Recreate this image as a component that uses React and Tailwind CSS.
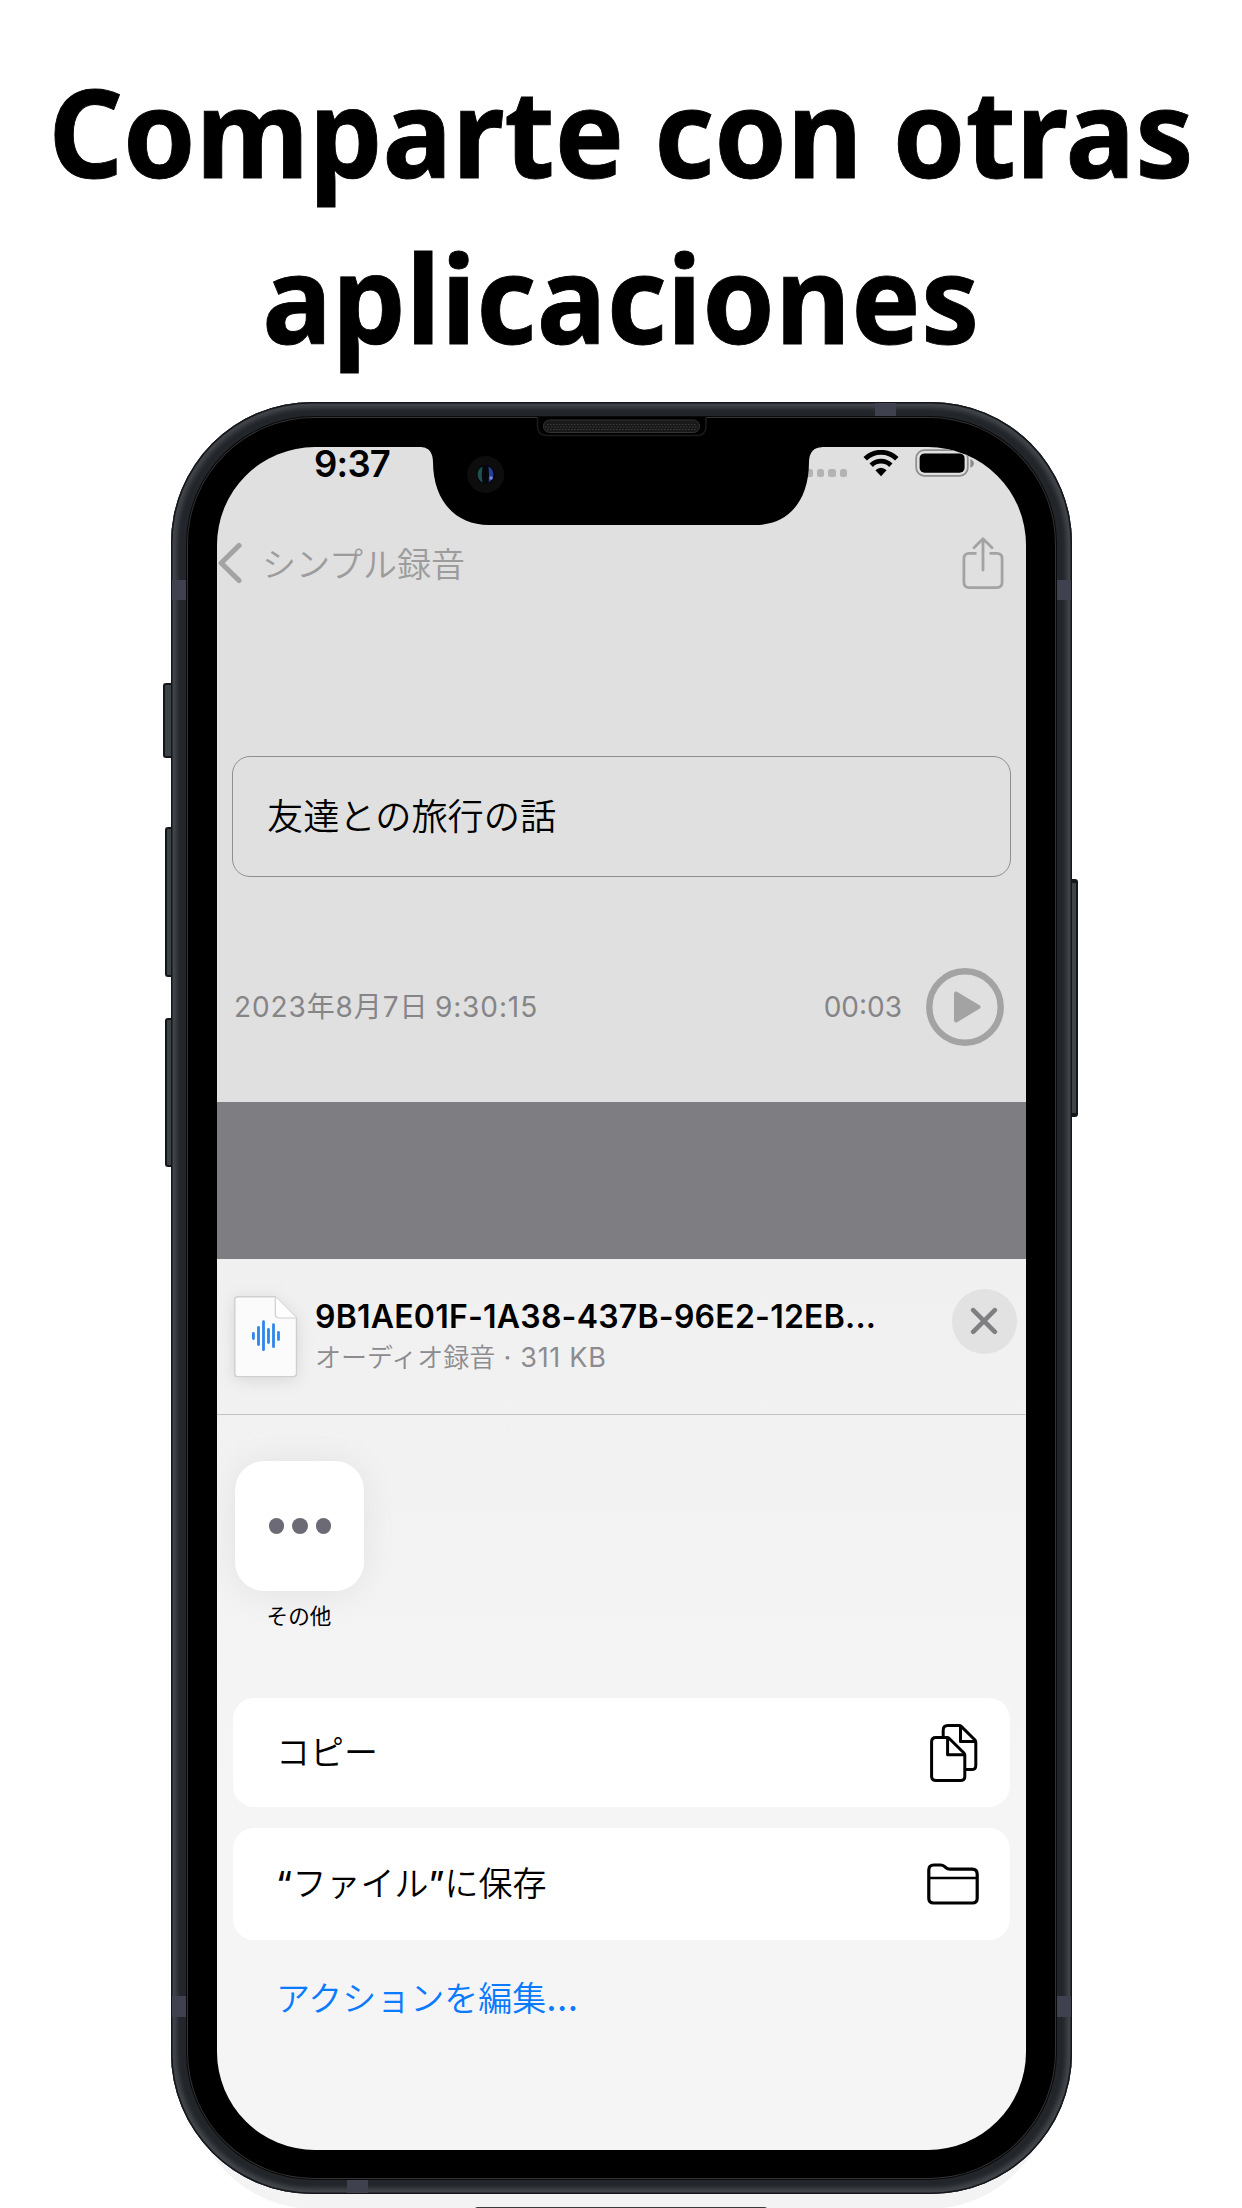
const SANS = "font-['Inter','Noto_Sans_CJK_JP',sans-serif]";

function StatusBar() {
  return (
    <div className="flex h-[78px] items-start pl-[97px] pr-[51px] text-black">
      <span className="text-[36.5px] font-semibold leading-[34px] tracking-[-0.8px]">9:37</span>
      <div className="ml-auto mt-[2px] flex items-start">
        <div className="mt-[20px] flex gap-[4px]">
          {[0, 1, 2, 3].map((i) => (
            <span key={i} className="size-[7.5px] rounded-[2.5px] bg-[#b3b3b3]" />
          ))}
        </div>
        <svg className="ml-[16px] mt-px" width="36" height="27" viewBox="0 0 36 27" fill="none" stroke="#000">
          <path d="M2.2 8.8C11 .2 25 .2 33.8 8.8" strokeWidth="5" />
          <path d="M8.2 15.2C13.5 9.8 22.5 9.8 27.8 15.2" strokeWidth="4.8" />
          <path d="M12.4 20.2Q18 15.2 23.6 20.2L18 26.2Z" fill="#000" stroke="none" />
        </svg>
        <svg className="ml-[16px]" width="60" height="29" viewBox="0 0 60 29">
          <rect x="1.2" y="1.2" width="51.6" height="25.6" rx="8" fill="none" stroke="#8e8e8e" strokeWidth="1.8" />
          <rect x="4.6" y="4.4" width="45" height="19.4" rx="5" fill="#000" />
          <path d="M55.3 10q3.6 1.6 3.6 4.4t-3.6 4.4z" fill="#8e8e8e" />
        </svg>
      </div>
    </div>
  );
}

function NavBar() {
  return (
    <div className="flex h-[76px] items-center pl-px pr-[22px]">
      <svg width="24" height="42" viewBox="0 0 24 42" fill="none" stroke="#a3a3a3" strokeWidth="5.2" strokeLinecap="round" strokeLinejoin="round">
        <path d="M21 3.5 3.2 21 21 38.5" />
      </svg>
      <span className="mb-px ml-[20px] font-['Noto_Sans_CJK_JP',sans-serif] text-[34px] font-[350] leading-[50px] text-[#9c9c9c]">シンプル録音</span>
      <svg className="ml-auto" width="42" height="54" viewBox="0 0 42 54" fill="none" stroke="#a3a3a3" strokeWidth="2.8">
        <path d="M14.5 17.4H7.2Q1.9 17.4 1.9 22.7V46.3Q1.9 51.6 7.2 51.6H34.8Q40.1 51.6 40.1 46.3V22.7Q40.1 17.4 34.8 17.4H27.5" />
        <path d="M21 34V3.2M12 11.8 21 2.8 30 11.8" strokeLinecap="round" strokeLinejoin="round" />
      </svg>
    </div>
  );
}

function Recording() {
  return (
    <div className="h-[655px] bg-[#e0e0e0]">
      <StatusBar />
      <NavBar />
      <div className="mx-[15px] mt-[155px] flex h-[121px] items-center rounded-[18px] border border-[#8f8f8f] pl-[34px]">
        <span className="mb-[5px] font-['Noto_Sans_CJK_JP',sans-serif] text-[36.2px] font-[350] leading-[50px] text-black">友達との旅行の話</span>
      </div>
      <div className="mt-[91px] flex h-[78px] items-center pl-[17px] pr-[22px] text-[28px] text-[#858587]">
        <span className="flex tracking-[0.9px]">
          <span>2023年8月7日</span>
          <span className="ml-[6.5px]">9:30:15</span>
        </span>
        <span className="ml-auto">00:03</span>
        <svg className="ml-[24px]" width="78" height="78" viewBox="0 0 78 78">
          <circle cx="39" cy="39" r="35.7" fill="none" stroke="#a3a3a3" strokeWidth="6.4" />
          <path d="M30 25.5v27L52.5 39z" fill="#a3a3a3" stroke="#a3a3a3" strokeWidth="4" strokeLinejoin="round" />
        </svg>
      </div>
    </div>
  );
}

function FileIcon() {
  return (
    <svg className="drop-shadow-[0_3px_8px_rgba(0,0,0,0.1)]" width="64" height="82" viewBox="0 0 64 82">
      <path d="M3.5.8H41.3L62.5 22V77.5Q62.5 80.6 59.5 80.6H3.5Q.8 80.6.8 77.8V3.5Q.8.8 3.5.8Z" fill="#fbfbfb" stroke="#cfcfcf" strokeWidth="1.4" />
      <path d="M41.3.8V18Q41.3 22 45.3 22H62.5" fill="#fff" stroke="#cfcfcf" strokeWidth="1.2" />
      <path d="M19.4 37.5v5M24.5 31.5v17M29.5 25.7v28M34.5 33.5v13M39.5 28.7v22M44.5 36.5v7" stroke="#2f86ea" strokeWidth="2.8" strokeLinecap="round" />
    </svg>
  );
}

function SheetHeader() {
  return (
    <div className="flex h-[156px] items-start border-b border-[#c4c4c6] pl-[17px] pr-[9px]">
      <div className="mt-[37px]"><FileIcon /></div>
      <div className="ml-[17px] mt-[38px] flex flex-col">
        <span className="text-[32px] font-semibold leading-[40px] tracking-[0.22px] text-black">9B1AE01F-1A38-437B-96E2-12EB...</span>
        <span className="text-[27px] leading-[38px] tracking-[0.7px] text-[#8c8c90]">
          <span className="font-['Noto_Sans_CJK_JP',sans-serif] text-[26px] font-[350] tracking-normal">オーディオ録音</span> · 311 KB
        </span>
      </div>
      <div className="ml-auto mt-[30px] flex size-[65px] items-center justify-center rounded-full bg-[#e3e2e3]">
        <svg className="mb-px mr-px" width="28" height="28" viewBox="0 0 28 28" stroke="#7f7f82" strokeWidth="4.6" strokeLinecap="round">
          <path d="M3.2 3.2 24.8 24.8M24.8 3.2 3.2 24.8" />
        </svg>
      </div>
    </div>
  );
}

function CopyIcon() {
  return (
    <svg width="48" height="58" viewBox="0 0 48 58" fill="none" stroke="#000" strokeWidth="3" strokeLinejoin="round">
      <path d="M13.2 12.6V6.2Q13.2 1.6 17.8 1.6H29.2Q30.4 1.6 31.2 2.4L45 16Q45.8 16.8 45.8 18V41.4Q45.8 45.6 41.6 45.6H36" />
      <path d="M30.5 2V17.6H45.6" />
      <path d="M6 13.4H17Q18.2 13.4 19 14.2L34 29Q34.8 29.8 34.8 31V52.4Q34.8 56.4 30.6 56.4H6Q1.6 56.4 1.6 52.2V17.8Q1.6 13.4 6 13.4Z" />
      <path d="M17.6 14V30.8H34.6" />
    </svg>
  );
}

function FolderIcon() {
  return (
    <svg width="52" height="42" viewBox="0 0 52 42" fill="none" stroke="#000" strokeWidth="3.2" strokeLinejoin="round">
      <path d="M1.8 35.2V7Q1.8 2 6.8 2H13.5Q15.8 2 17.4 3.4L19 4.8Q20.6 6.1 22.8 6.1H45.2Q50.2 6.1 50.2 11.1V35.2Q50.2 40 45.2 40H6.8Q1.8 40 1.8 35.2Z" />
      <path d="M1.8 15H50.2" strokeWidth="2.6" />
    </svg>
  );
}

function ShareSheet() {
  return (
    <div className="h-[891px] bg-gradient-to-b from-[#f1f0f1] to-[#f5f5f5] to-60%">
      <SheetHeader />
      <div className="ml-[18px] mt-[46px] flex w-[129px] flex-col items-center">
        <div className="flex h-[130px] w-[129px] items-center justify-center gap-[8.2px] rounded-[29px] bg-white pl-px shadow-[0_2px_36px_rgba(0,0,0,0.07)]">
          {[0, 1, 2].map((i) => (
            <span key={i} className="size-[15.4px] rounded-full bg-[#6b6a75]" />
          ))}
        </div>
        <span className="mr-px mt-[8px] font-['Noto_Sans_CJK_JP',sans-serif] text-[21.6px] leading-[32px] text-black">その他</span>
      </div>
      <div className="mx-[16px] mt-[67px] flex flex-col gap-[21px] font-['Noto_Sans_CJK_JP',sans-serif] text-[34px] font-[350] text-black">
        <div className="flex h-[109px] items-center justify-between rounded-[21px] bg-white pl-[43px] pr-[32px]">
          <span className="mb-[3px] leading-[50px]">コピー</span>
          <CopyIcon />
        </div>
        <div className="flex h-[112px] items-center justify-between rounded-[21px] bg-white pl-[43px] pr-[31px]">
          <span className="mb-[3px] leading-[50px]"><span className="font-['Inter'] font-medium tracking-[0.4px]">“</span>ファイル<span className="font-['Inter'] font-medium">”</span>に保存</span>
          <FolderIcon />
        </div>
      </div>
      <div className="ml-[59px] mt-[32px] font-['Noto_Sans_CJK_JP',sans-serif] text-[34px] font-[350] leading-[50px] text-[#0a7aff]">
        アクションを編集<span className="font-['Inter'] font-medium tracking-[0.4px]">...</span>
      </div>
    </div>
  );
}

function Notch() {
  return (
    <div className="absolute left-[235px] top-0 flex w-[400px] flex-col">
      <svg width="400" height="108" viewBox="0 0 400 108">
        <path d="M0 3H400V30.3Q387.500 30.3 387 45C387 82 368 108 333 108H67C32 108 11 82 11 45Q10.500 30.3 -1 30.3Z" fill="#000" />
        <path d="M115.500 0V9Q115.500 18.500 125 18.500H275Q284 18.500 284 9V0" fill="#000" stroke="#1c1c1c" strokeWidth="1.500" />
        <rect x="121.500" y="3" width="156" height="12.500" rx="6" fill="#191919" stroke="#333" />
        <path d="M125 7.500H274M123 10H276M125 12.500H274" stroke="#3a3a3a" strokeWidth="1" strokeDasharray="1.500 1.500" />
        <circle cx="63.700" cy="57.500" r="18.500" fill="#0d0d0e" />
        <circle cx="63.700" cy="57.500" r="9.500" fill="#05070c" />
        <path d="M60.500 49.500a9 9 0 0 0 0 16q-1.500-8 0-16z" fill="#1f524e" />
        <path d="M66.500 49.500a9 9 0 0 1 0 16q1-8 0-16z" fill="#24409a" />
        <circle cx="69" cy="61" r="1.8" fill="#7a84d8" />
      </svg>
    </div>
  );
}

function Phone() {
  return (
    <div className="relative ml-[171px] mt-[22px] h-[1792px] w-[901px]">
      <div className="absolute left-[-8px] top-[281px] h-[75px] w-[10px] rounded-l-[3px] border-y-2 border-l-2 border-[#14171a] bg-[#3e4347]" />
      <div className="absolute left-[-6px] top-[425px] h-[150px] w-[8px] rounded-l-[3px] border-y-2 border-l-2 border-[#14171a] bg-[#3e4347]" />
      <div className="absolute left-[-6px] top-[616px] h-[149px] w-[8px] rounded-l-[3px] border-y-2 border-l-2 border-[#14171a] bg-[#3e4347]" />
      <div className="absolute right-[-6px] top-[477px] h-[238px] w-[8px] rounded-r-[3px] border-y-4 border-r-2 border-[#14171a] bg-[#3e4347]" />
      <div className="relative h-full overflow-hidden rounded-[141px] bg-[#22262b] px-[16px] py-[15px] shadow-[inset_0_0_0_1.5px_#14161a,inset_0_0_4px_6px_#42464b]">
        <div className="absolute left-[1px] top-[178px] h-[20px] w-[15px] bg-[#3f414f]" />
        <div className="absolute right-[1px] top-[178px] h-[20px] w-[15px] bg-[#3f414f]" />
        <div className="absolute left-[1px] top-[1594px] h-[21px] w-[15px] bg-[#3f414f]" />
        <div className="absolute right-[1px] top-[1594px] h-[21px] w-[15px] bg-[#3f414f]" />
        <div className="absolute left-[704px] top-[1px] h-[13px] w-[21px] bg-[#3f414f]" />
        <div className="absolute bottom-[1px] left-[176px] h-[13px] w-[21px] bg-[#3f414f]" />
        <div className="relative h-full rounded-[127px] bg-black px-[30px] pb-[29px] pt-[30px] shadow-[0_0_0_1px_#0a0a0a,inset_0_0_0_1px_#333]">
          <div className="flex h-full flex-col overflow-hidden rounded-[98px]">
            <Recording />
            <div className="h-[157px] bg-[#7e7d82]" />
            <ShareSheet />
          </div>
          <Notch />
        </div>
      </div>
    </div>
  );
}

export default function App() {
  return (
    <div className={"relative flex h-[2208px] w-[1242px] flex-col overflow-hidden bg-white " + SANS}>
      <h1 className="mt-[48px] flex scale-x-[0.957] flex-col items-center whitespace-nowrap font-['Noto_Sans',sans-serif] text-[121.5px] font-bold leading-[166px] text-black [-webkit-text-stroke:0.9px_black]">
        <span>Comparte con otras</span>
        <span className="tracking-[0.4px]">aplicaciones</span>
      </h1>
      <div className="absolute left-[190px] top-[2000px] h-[209px] w-[863px] rounded-b-[125px] bg-[#f4f3f4]" />
      <div className="absolute left-[473px] top-[2207px] h-[10px] w-[296px] rounded-full bg-[#3a3a3a]" />
      <Phone />
    </div>
  );
}
